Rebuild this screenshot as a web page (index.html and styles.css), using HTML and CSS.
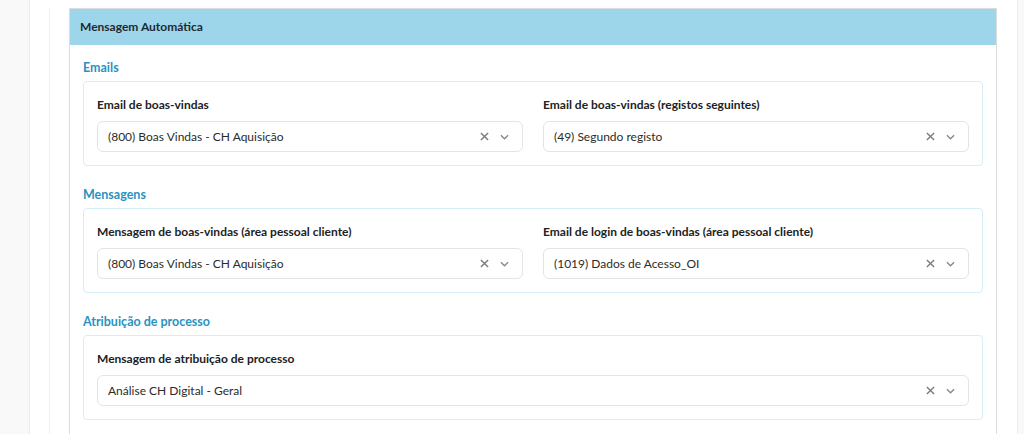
FILE: index.html
```html
<!DOCTYPE html>
<html lang="pt">
<head>
<meta charset="utf-8">
<title>Mensagem Automática</title>
<link rel="stylesheet" href="styles.css">
</head>
<body>
<div class="page">
  <div class="inner">
    <div class="card">
      <div class="card-header">Mensagem Automática</div>
      <div class="card-body">
        <div class="section">
          <div class="section-title">Emails</div>
          <div class="box grid2">
            <div class="field">
              <label class="label">Email de boas-vindas</label>
              <div class="select"><span class="value">(800) Boas Vindas - CH Aquisição</span>
                <span class="icons"><svg class="ico-x" viewBox="0 0 10 10"><path d="M1 1L9 9M9 1L1 9"/></svg><svg class="ico-chev" viewBox="0 0 10 6"><path d="M1 1L5 5L9 1"/></svg></span></div>
            </div>
            <div class="field">
              <label class="label">Email de boas-vindas (registos seguintes)</label>
              <div class="select"><span class="value">(49) Segundo registo</span>
                <span class="icons"><svg class="ico-x" viewBox="0 0 10 10"><path d="M1 1L9 9M9 1L1 9"/></svg><svg class="ico-chev" viewBox="0 0 10 6"><path d="M1 1L5 5L9 1"/></svg></span></div>
            </div>
          </div>
        </div>
        <div class="section">
          <div class="section-title">Mensagens</div>
          <div class="box grid2">
            <div class="field">
              <label class="label">Mensagem de boas-vindas (área pessoal cliente)</label>
              <div class="select"><span class="value">(800) Boas Vindas - CH Aquisição</span>
                <span class="icons"><svg class="ico-x" viewBox="0 0 10 10"><path d="M1 1L9 9M9 1L1 9"/></svg><svg class="ico-chev" viewBox="0 0 10 6"><path d="M1 1L5 5L9 1"/></svg></span></div>
            </div>
            <div class="field">
              <label class="label">Email de login de boas-vindas (área pessoal cliente)</label>
              <div class="select"><span class="value">(1019) Dados de Acesso_OI</span>
                <span class="icons"><svg class="ico-x" viewBox="0 0 10 10"><path d="M1 1L9 9M9 1L1 9"/></svg><svg class="ico-chev" viewBox="0 0 10 6"><path d="M1 1L5 5L9 1"/></svg></span></div>
            </div>
          </div>
        </div>
        <div class="section">
          <div class="section-title">Atribuição de processo</div>
          <div class="box">
            <div class="field">
              <label class="label">Mensagem de atribuição de processo</label>
              <div class="select"><span class="value">Análise CH Digital - Geral</span>
                <span class="icons"><svg class="ico-x" viewBox="0 0 10 10"><path d="M1 1L9 9M9 1L1 9"/></svg><svg class="ico-chev" viewBox="0 0 10 6"><path d="M1 1L5 5L9 1"/></svg></span></div>
            </div>
          </div>
        </div>
      </div>
    </div>
  </div>
</div>
</body>
</html>
```
FILE: styles.css
```css
* { box-sizing: border-box; }
html, body { margin: 0; padding: 0; }
body {
  background: #f9f9f9;
  font-family: Lato, "Noto Sans", "Liberation Sans", sans-serif;
  color: #222;
  height: 434px;
  overflow: hidden;
}
.page {
  margin-left: 29px;
  width: 989px;
  min-height: 434px;
  background: #fff;
  border-left: 1px solid #ececec;
  border-right: 1px solid #ececec;
  padding-top: 8px;
}
.inner {
  margin-left: 19px;
  border-left: 1px solid #efefef;
  padding-left: 19px;
  padding-right: 20px;
  min-height: 426px;
}
.card {
  border: 1px solid #dcdcdc;
  border-bottom: none;
  background: #fff;
}
.card-header {
  background: #9dd5ea;
  height: 36px;
  line-height: 35px;
  padding-left: 10px;
  font-size: 12px;
  font-weight: 700;
  color: #1f2a30;
}
.card-body {
  padding: 14px 13px 20px 13px;
}
.section + .section { margin-top: 20px; }
.section-title {
  font-size: 12.5px;
  line-height: 16px;
  font-weight: 700;
  color: #2a93bf;
  padding-top: 1px;
  margin-bottom: 5px;
}
.box {
  border: 1px solid #d6eef7;
  border-radius: 4px;
  padding: 15px 13px 13px 13px;
}
.grid2 {
  display: grid;
  grid-template-columns: 1fr 1fr;
  column-gap: 20px;
}
.field { display: flex; flex-direction: column; }
.label {
  font-size: 12px;
  line-height: 16px;
  font-weight: 700;
  color: #222;
  margin-bottom: 8px;
}
.select {
  height: 31px;
  border: 1px solid #e4e4e4;
  border-radius: 6px;
  display: flex;
  align-items: center;
  justify-content: space-between;
  padding: 0 13px 0 10px;
}
.value {
  font-size: 12px;
  color: #2b2b2b;
}
.icons { display: flex; align-items: center; gap: 11px; }
.ico-x {
  width: 9px; height: 9px;
  fill: none; stroke: #7a7a7a; stroke-width: 1.5;
}
.ico-chev {
  width: 9px; height: 6px;
  fill: none; stroke: #808a94; stroke-width: 1.5;
}
```
